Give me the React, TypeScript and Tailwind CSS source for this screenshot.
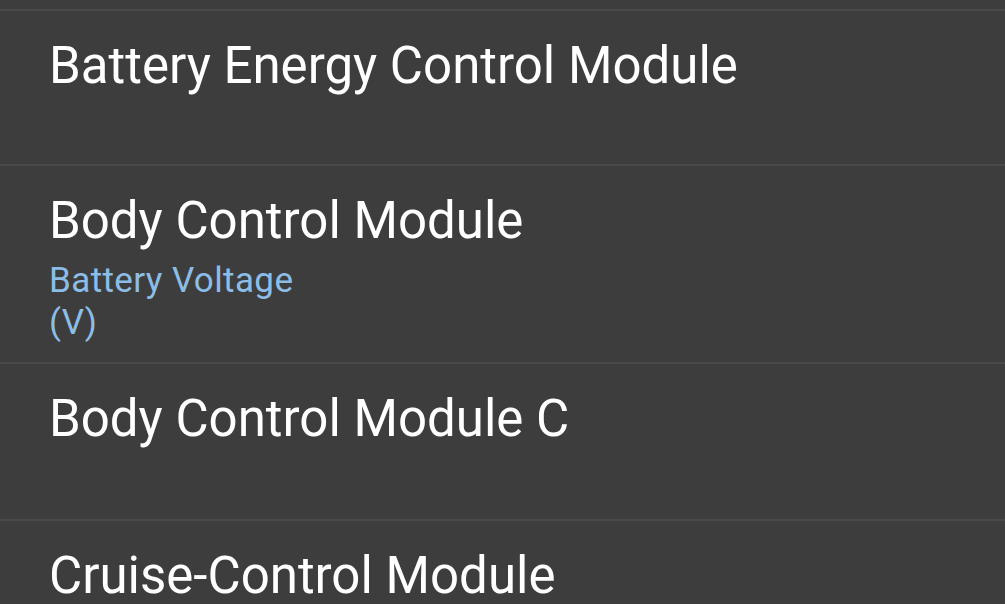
const rows: { title: string; sub?: string[]; h: string }[] = [
  { title: "Battery Energy Control Module", h: "h-[155px]" },
  { title: "Body Control Module", sub: ["Battery Voltage", "(V)"], h: "h-[198px]" },
  { title: "Body Control Module C", h: "h-[157px]" },
  { title: "Cruise-Control Module", h: "h-[157px]" },
];

export default function App() {
  return (
    <div className="h-[604px] w-[1005px] overflow-hidden bg-[#3d3d3d] font-['Roboto',sans-serif]">
      <div className="h-[11px] border-b-2 border-[#4a4a4a]" />
      {rows.map((r) => (
        <div key={r.title} className={`${r.h} border-b-2 border-[#4a4a4a] pl-[49px] pt-[26px]`}>
          <div className="text-[51px] leading-[58px] text-white">{r.title}</div>
          {r.sub && (
            <div className="mt-[10px] text-[35px] leading-[42px] tracking-[0.4px] text-[#8cbde6]">
              {r.sub.map((s) => (
                <div key={s}>{s}</div>
              ))}
            </div>
          )}
        </div>
      ))}
    </div>
  );
}
